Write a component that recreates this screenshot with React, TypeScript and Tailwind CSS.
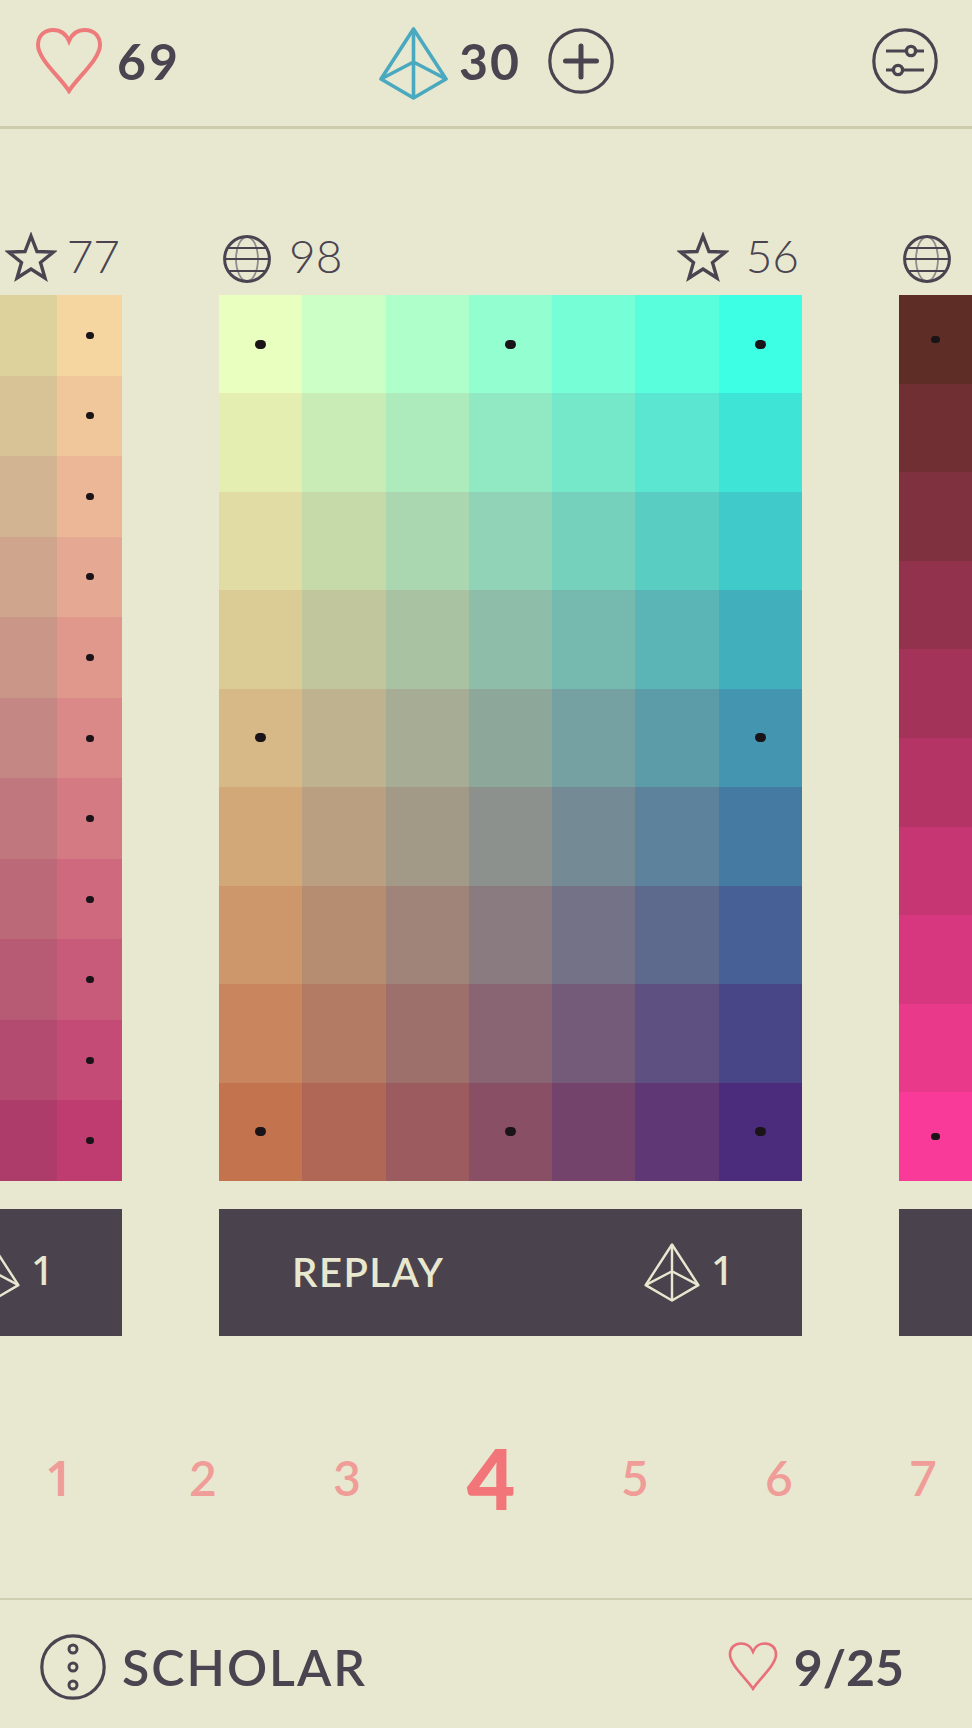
import type { ReactNode } from 'react'

type RGB = [number, number, number]

const mix = (a: RGB, b: RGB, t: number): RGB => [
  a[0] + (b[0] - a[0]) * t,
  a[1] + (b[1] - a[1]) * t,
  a[2] + (b[2] - a[2]) * t,
]
const css = (c: RGB) => `rgb(${c.map(Math.round).join(',')})`

// corners of each level: top left, top right, bottom left, bottom right
type Level = {
  cols: number
  rows: number
  corners: [RGB, RGB, RGB, RGB]
  dots: (col: number, row: number) => boolean
  dot: string
}

const levels: Level[] = [
  {
    cols: 9,
    rows: 11,
    corners: [[46, 182, 128], [246, 214, 160], [54, 60, 64], [190, 60, 112]],
    dots: (c) => c === 8,
    dot: 'w-[8px] h-[7px]',
  },
  {
    cols: 7,
    rows: 9,
    corners: [[233, 255, 191], [60, 255, 227], [196, 115, 79], [75, 43, 123]],
    dots: (c, r) => (c === 0 || c === 6) ? r % 4 === 0 : c === 3 && r % 8 === 0,
    dot: 'w-[11px] h-[9px]',
  },
  {
    cols: 8,
    rows: 10,
    corners: [[94, 46, 38], [120, 60, 50], [249, 58, 152], [240, 70, 150]],
    dots: (c, r) => c === 0 && (r === 0 || r === 9),
    dot: 'w-[9px] h-[7px]',
  },
]

function Heart({ className, strokeWidth }: { className: string; strokeWidth: number }) {
  return (
    <svg viewBox="0 0 66 66" className={className} fill="none" stroke="currentColor" strokeWidth={strokeWidth}>
      <path d="M33 63C25 50 2 31 2 17C2 8 8 2 17 2C24 2 30 6 33 13C36 6 42 2 49 2C58 2 64 8 64 17C64 31 41 50 33 63Z" />
    </svg>
  )
}

function Pyramid({ className, strokeWidth }: { className: string; strokeWidth: number }) {
  return (
    <svg viewBox="0 0 69 73" className={className} fill="none" stroke="currentColor" strokeWidth={strokeWidth} strokeLinejoin="round">
      <path d="M34.5 2L2 52L34.5 71L67 52Z" />
      <path d="M34.5 2V71M2 52L34.5 35L67 52" />
    </svg>
  )
}

function Ring({ children }: { children: ReactNode }) {
  return (
    <svg viewBox="0 0 66 66" className="w-[66px] h-[66px] shrink-0 text-[#4a4450]" fill="none" stroke="currentColor" strokeWidth="3.2">
      <circle cx="33" cy="33" r="31.2" />
      {children}
    </svg>
  )
}

function Star() {
  return (
    <svg viewBox="0 0 52 50" className="w-[52px] h-[50px] shrink-0 text-[#4a4450]" fill="none" stroke="currentColor" strokeWidth="3.4">
      <path d="M26 4L32 19.5L48.5 20L35.5 30.5L40 46L26 37L12 46L16.5 30.5L3.5 20L20 19.5Z" />
    </svg>
  )
}

function Globe() {
  return (
    <svg viewBox="0 0 48 48" className="w-[48px] h-[48px] shrink-0 mt-[4px]" fill="none" stroke="#4a4450">
      <ellipse cx="24" cy="24" rx="11" ry="22" stroke="#8f8b8c" strokeWidth="1.8" />
      <path d="M5 13H43M2 24H46M5 36H43" strokeWidth="2.2" />
      <circle cx="24" cy="24" r="22.4" strokeWidth="3" />
    </svg>
  )
}

function Board({ level, left, right, first }: { level: Level; left: string; right: string; first?: boolean }) {
  const [tl, tr, bl, br] = level.corners
  const rows = Array.from({ length: level.rows }, (_, r) => r)
  const cols = Array.from({ length: level.cols }, (_, c) => c)
  return (
    <div className={`w-[583px] shrink-0 ${first ? 'ml-[-461px]' : ''}`}>
      <div className={`h-[52px] mb-[12px] flex items-center pl-[4px] ${first ? 'pr-[2px]' : 'pr-[3px]'} text-[46px] font-light text-[#4a4450]`}>
        <Globe />
        <span className="ml-[18px] mt-[-3px]">{left}</span>
        <div className="flex-1" />
        <Star />
        <span className={`${first ? 'ml-[10px]' : 'ml-[17px]'} mt-[-3px]`}>{right}</span>
      </div>
      <div className="h-[886px] flex flex-col">
        {rows.map(r => (
          <div key={r} className="flex-1 flex">
            {cols.map(c => {
              const y = r / (level.rows - 1)
              const x = c / (level.cols - 1)
              const color = css(mix(mix(tl, tr, x), mix(bl, br, x), y))
              return (
                <div key={c} className="flex-1 flex items-center justify-center" style={{ backgroundColor: color }}>
                  {level.dots(c, r) && <div className={`${level.dot} rounded-full bg-[#1a1418]`} />}
                </div>
              )
            })}
          </div>
        ))}
      </div>
      <div className="mt-[28px] h-[127px] bg-[#4a434d] flex items-center text-[#e8e8d0] pl-[73px] pr-[68px]">
        <span className="text-[40px] font-semibold tracking-[1.5px] leading-none mt-[-2px]">REPLAY</span>
        <div className="flex-1" />
        <Pyramid className="w-[56px] h-[61px] shrink-0 mt-[-1px]" strokeWidth={3} />
        <span className="ml-[11px] text-[40px] font-medium leading-none mt-[-6px] font-['Noto_Sans',sans-serif]">1</span>
      </div>
    </div>
  )
}

export default function App() {
  const pages = [1, 2, 3, 4, 5, 6, 7]
  return (
    <div className="w-[972px] h-[1728px] overflow-hidden flex flex-col bg-[#e8e8d0] font-['Lato',sans-serif] text-[#4a4450]">
      {/* Header */}
      <div className="h-[129px] shrink-0 pb-[4px] border-b-[3px] border-[#cfccae] flex items-center">
        <Heart className="ml-[36px] w-[66px] h-[66px] shrink-0 text-[#ee7b7b]" strokeWidth={4} />
        <span className="ml-[15px] w-[63px] text-[50px] font-bold leading-none tracking-[3px]">69</span>
        <Pyramid className="ml-[199px] w-[69px] h-[73px] mt-[5px] shrink-0 text-[#4aa8bf]" strokeWidth={3.6} />
        <span className="ml-[11px] w-[59px] text-[50px] font-bold leading-none tracking-[2px]">30</span>
        <div className="ml-[30px]">
          <Ring>
            <path d="M17.5 33H48.5M33 18V49" strokeWidth="5" strokeLinecap="round" />
          </Ring>
        </div>
        <div className="ml-[258px]">
          <Ring>
            <path d="M14 23H52M14 42H52" strokeWidth="3" />
            <circle cx="39" cy="23" r="4.6" fill="#e8e8d0" strokeWidth="3.4" />
            <circle cx="26" cy="42" r="4.6" fill="#e8e8d0" strokeWidth="3.4" />
          </Ring>
        </div>
      </div>

      {/* Levels */}
      <div className="mt-[102px] flex gap-[97px] shrink-0">
        <Board level={levels[0]} left="" right="77" first />
        <Board level={levels[1]} left="98" right="56" />
        <Board level={levels[2]} left="1" right="" />
      </div>

      {/* Pages */}
      <div className="mt-[110px] h-[64px] shrink-0 ml-[-13px] flex items-center">
        {pages.map(p => (
          <div
            key={p}
            className={p === 4
              ? 'w-[144px] shrink-0 text-center text-[84px] font-black leading-none text-[#f2757a]'
              : `w-[144px] shrink-0 text-center text-[48px] font-semibold leading-none text-[#f09c98] ${p === 1 ? "font-['Noto_Sans',sans-serif]" : ''}`}
          >
            {p}
          </div>
        ))}
      </div>

      {/* Footer */}
      <div className="mt-auto h-[130px] shrink-0 pt-[5px] border-t-[2px] border-[#cfcfb2] flex items-center">
        <div className="ml-[40px]">
          <Ring>
            <circle cx="33" cy="15" r="4" strokeWidth="3" />
            <circle cx="33" cy="33" r="4" strokeWidth="3" />
            <circle cx="33" cy="51" r="4" strokeWidth="3" />
          </Ring>
        </div>
        <span className="ml-[16px] text-[50px] font-semibold leading-none tracking-[2px]">SCHOLAR</span>
        <div className="flex-1" />
        <Heart className="w-[50px] h-[49px] shrink-0 text-[#e8707a]" strokeWidth={3.6} />
        <span className="ml-[16px] mr-[68px] text-[50px] font-bold leading-none">9/25</span>
      </div>
    </div>
  )
}
